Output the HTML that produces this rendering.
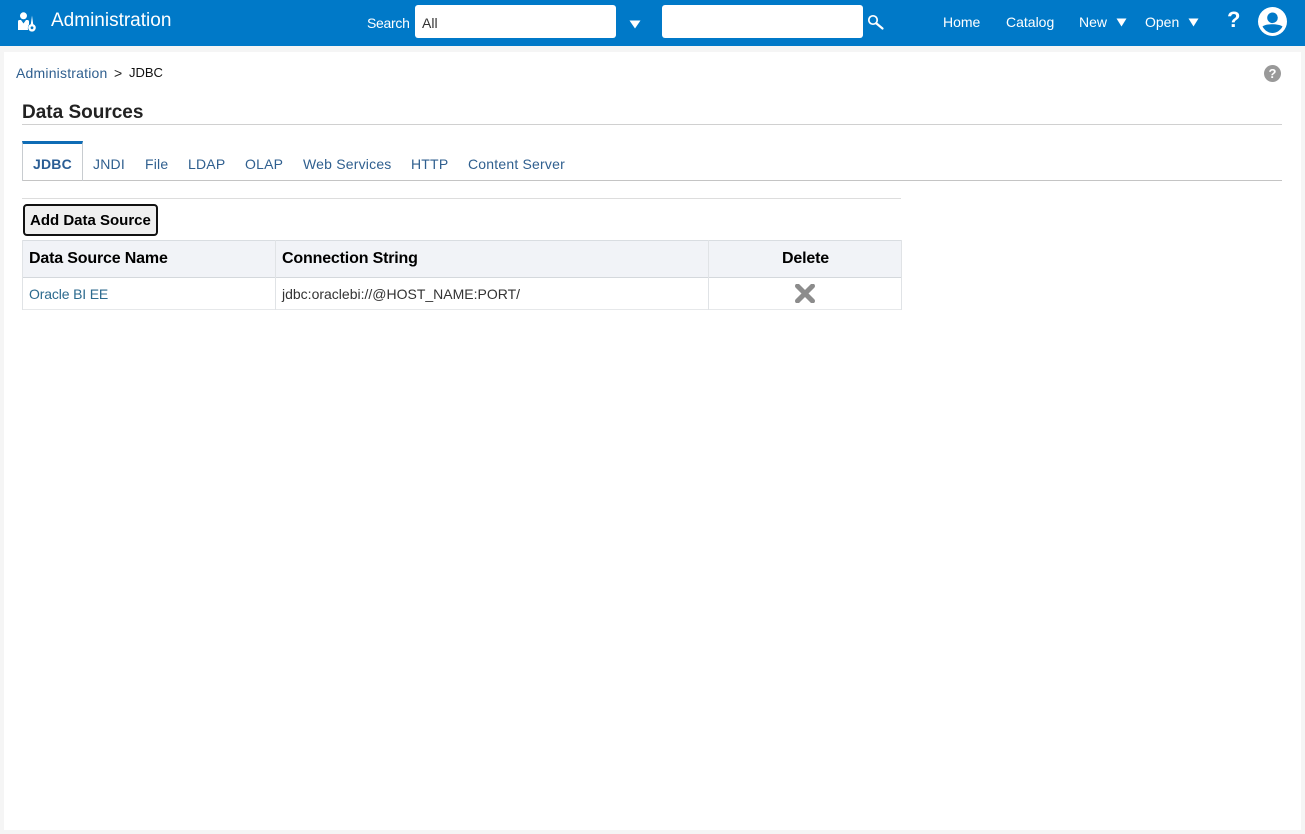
<!DOCTYPE html>
<html lang="en">
<head>
<meta charset="utf-8">
<title>Administration</title>
<style>
html,body{margin:0;padding:0;width:1305px;height:834px;overflow:hidden;background:#f5f5f5;font-family:"Liberation Sans",sans-serif;}
.a{position:absolute;white-space:nowrap;line-height:18px;}
.abs{position:absolute;}
.w{color:#fff;font-size:14px;}
.l{color:#2f5f8f;font-size:14px;letter-spacing:.2px;}
.th{color:#000;font-size:16px;font-weight:bold;letter-spacing:-.17px;}
.sep{position:absolute;}
</style>
</head>
<body>
<div class="abs" style="left:4px;top:52px;width:1297px;height:778px;background:#fff;"></div>
<div class="abs" style="left:0;top:0;width:1305px;height:46px;background:#0079c8;"></div>

<svg class="abs" style="left:16px;top:11px" width="22" height="22" viewBox="0 0 22 22">
<circle cx="7.500" cy="4.800" r="3.500" fill="#fff"/>
<path d="M2 19V10.500Q2 9 3.500 9H5L7.500 12.500L10 9H11.500Q12.800 9 13 10.500V13.500Q11.500 15.500 12 19Z" fill="#fff"/>
<path d="M16 4.500L17.300 14H14.700Z" fill="#fff"/>
<circle cx="16" cy="16.800" r="3.800" fill="#fff"/>
<circle cx="16" cy="16.800" r="1.400" fill="#0079c8"/>
</svg>
<div class="a" style="left:51px;top:11px;font-size:19px;line-height:20px;color:#fff;">Administration</div>
<div class="a w" style="left:367px;top:14px;letter-spacing:-.3px;">Search</div>
<div class="abs" style="left:415px;top:5px;width:201px;height:33px;background:#fff;border-radius:3px;"></div>
<div class="a" style="left:422px;top:14px;font-size:14px;color:#333;">All</div>
<svg class="abs" style="left:629px;top:20px" width="12" height="9" viewBox="0 0 12 9"><path d="M0.5 0.5H11.5L6 8.5Z" fill="#fff"/></svg>
<div class="abs" style="left:662px;top:5px;width:201px;height:33px;background:#fff;border-radius:3px;"></div>
<svg class="abs" style="left:867px;top:13px" width="18" height="18" viewBox="0 0 18 18"><circle cx="6" cy="7" r="4.200" fill="none" stroke="#fff" stroke-width="1.700"/><path d="M9.500 10.500L15.500 15.500" stroke="#fff" stroke-width="2.200" stroke-linecap="round"/></svg>

<div class="a w" style="left:943px;top:13px;">Home</div>
<div class="a w" style="left:1006px;top:13px;">Catalog</div>
<div class="a w" style="left:1079px;top:13px;">New</div>
<svg class="abs" style="left:1116px;top:18px" width="11" height="9" viewBox="0 0 11 9"><path d="M0.5 0.5H10.5L5.500 8.500Z" fill="#fff"/></svg>
<div class="a w" style="left:1145px;top:13px;">Open</div>
<svg class="abs" style="left:1188px;top:18px" width="11" height="9" viewBox="0 0 11 9"><path d="M0.5 0.5H10.5L5.500 8.500Z" fill="#fff"/></svg>
<div class="a" style="left:1227px;top:8px;font-size:22px;line-height:24px;font-weight:bold;color:#fff;">?</div>
<svg class="abs" style="left:1258px;top:7px" width="29" height="29" viewBox="0 0 29 29">
<circle cx="14.500" cy="14.500" r="14.500" fill="#fff"/>
<circle cx="14.500" cy="10.800" r="5.300" fill="#0079c8"/>
<path d="M4.500 19.500C8 16.500 21 16.500 24.500 19.500C22 24 18 26 14.500 26C11 26 7 24 4.500 19.500Z" fill="#0079c8"/>
</svg>

<div class="a l" style="left:16px;top:64px;">Administration</div>
<div class="a" style="left:114px;top:64px;font-size:14px;color:#222;">&gt;</div>
<div class="a" style="left:129px;top:64px;font-size:13px;color:#111;">JDBC</div>
<svg class="abs" style="left:1264px;top:65px" width="17" height="17" viewBox="0 0 17 17"><circle cx="8.500" cy="8.500" r="8.500" fill="#999"/><text x="8.500" y="13" text-anchor="middle" font-family="Liberation Sans" font-size="13" font-weight="bold" fill="#fff">?</text></svg>

<div class="a" style="left:22px;top:102px;font-size:19px;line-height:22px;font-weight:bold;color:#222;">Data Sources</div>
<div class="sep" style="left:22px;top:124px;width:1260px;height:1px;background:#d0d0d0;"></div>

<div class="sep" style="left:22px;top:180px;width:1260px;height:1px;background:#c4c4c4;"></div>
<div class="abs" style="left:22px;top:141px;width:59px;height:37px;border-top:3px solid #0f6cb5;border-left:1px solid #c8ccd0;border-right:1px solid #c8ccd0;"></div>
<div class="a" style="left:33px;top:155px;font-size:14px;font-weight:bold;color:#2a5d94;letter-spacing:.2px;">JDBC</div>
<div class="a l" style="left:93px;top:155px;">JNDI</div>
<div class="a l" style="left:145px;top:155px;">File</div>
<div class="a l" style="left:188px;top:155px;">LDAP</div>
<div class="a l" style="left:245px;top:155px;">OLAP</div>
<div class="a l" style="left:303px;top:155px;">Web Services</div>
<div class="a l" style="left:411px;top:155px;">HTTP</div>
<div class="a l" style="left:468px;top:155px;">Content Server</div>

<div class="sep" style="left:22px;top:198px;width:879px;height:1px;background:#ddd;"></div>
<div class="abs" style="left:23px;top:204px;width:131px;height:28px;border:2px solid #111;border-radius:4px;background:#efefef;"></div>
<div class="a" style="left:30px;top:212px;font-size:15px;font-weight:bold;color:#000;">Add Data Source</div>

<div class="abs" style="left:22px;top:240px;width:880px;height:37px;background:#f1f3f7;"></div>
<div class="sep" style="left:22px;top:240px;width:880px;height:1px;background:#d9dde1;"></div>
<div class="sep" style="left:22px;top:277px;width:880px;height:1px;background:#d4d8dc;"></div>
<div class="sep" style="left:22px;top:309px;width:880px;height:1px;background:#e6e8ea;"></div>
<div class="sep" style="left:22px;top:240px;width:1px;height:70px;background:#e0e3e6;"></div>
<div class="sep" style="left:275px;top:240px;width:1px;height:70px;background:#e0e3e6;"></div>
<div class="sep" style="left:708px;top:240px;width:1px;height:70px;background:#e0e3e6;"></div>
<div class="sep" style="left:901px;top:240px;width:1px;height:70px;background:#e0e3e6;"></div>

<div class="a th" style="left:29px;top:250px;">Data Source Name</div>
<div class="a th" style="left:282px;top:250px;">Connection String</div>
<div class="a th" style="left:782px;top:250px;">Delete</div>

<div class="a" style="left:29px;top:285px;font-size:14px;color:#2c6a8e;letter-spacing:-.15px;">Oracle BI EE</div>
<div class="a" style="left:282px;top:285px;font-size:14px;color:#333;">jdbc:oraclebi://@HOST_NAME:PORT/</div>
<svg class="abs" style="left:795px;top:284px" width="20" height="19" viewBox="0 0 20 19"><path d="M2.500 2L17.500 17M17.500 2L2.500 17" stroke="#8c8c8c" stroke-width="5" stroke-linecap="round"/></svg>
</body>
</html>
